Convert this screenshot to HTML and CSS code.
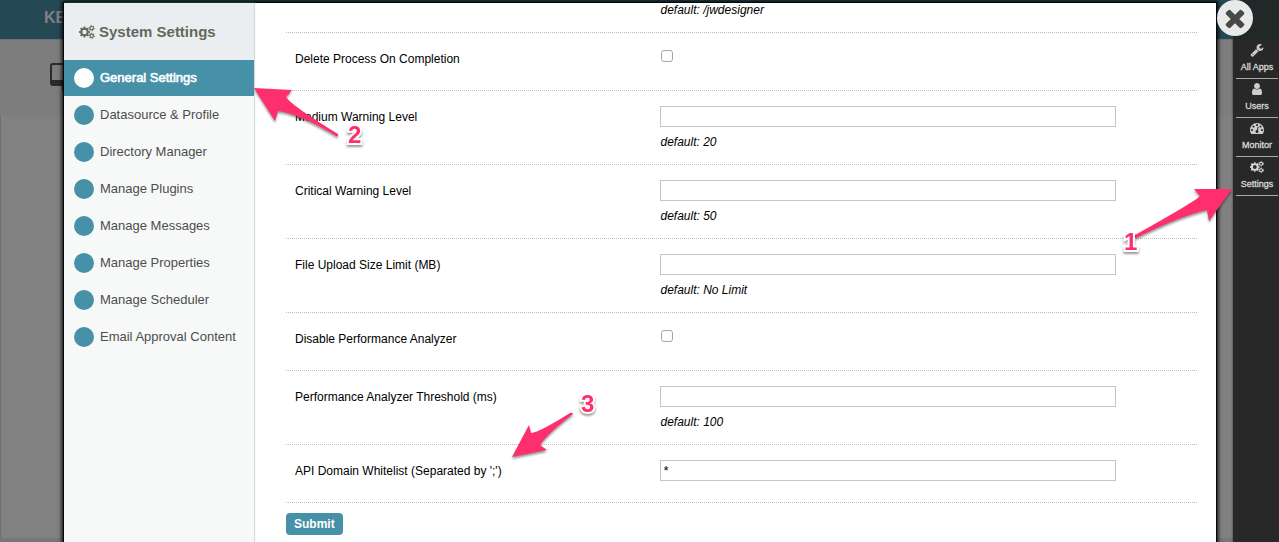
FILE: index.html
```html
<!DOCTYPE html>
<html lang="en">
<head>
<meta charset="utf-8">
<title>System Settings</title>
<link rel="stylesheet" href="styles.css">
</head>
<body>
<svg class="sprite" aria-hidden="true">
  <symbol id="gears" viewBox="0 0 16 14">
    <g fill="none" stroke="currentColor">
      <circle cx="5.5" cy="7" r="3.3" stroke-width="2.2"/>
      <circle cx="5.5" cy="7" r="4.7" stroke-width="1.6" pathLength="16" stroke-dasharray="1 1" stroke-dashoffset=".5"/>
      <circle cx="12.7" cy="3.2" r="1.7" stroke-width="1.2"/>
      <circle cx="12.7" cy="3.2" r="2.6" stroke-width="1" pathLength="12" stroke-dasharray="1 1"/>
      <circle cx="12.7" cy="10.8" r="1.7" stroke-width="1.2"/>
      <circle cx="12.7" cy="10.8" r="2.6" stroke-width="1" pathLength="12" stroke-dasharray="1 1"/>
    </g>
  </symbol>
</svg>

<div class="page">
  <header class="topbar"><span class="brand">KE</span></header>
  <div class="tools">
    <svg class="monitor" viewBox="0 0 34 30" aria-hidden="true">
      <rect x="1" y="1" width="32" height="21" rx="2" fill="none" stroke="#2b2b2b" stroke-width="2"/>
      <path d="M1 17h32v4q0 2-2 2H3q-2 0-2-2zM12 23h10v5H12z" fill="#2b2b2b"/>
    </svg>
  </div>
  <main class="canvas"></main>
  <footer class="foot"></footer>
</div>

<nav class="quick" aria-label="Administration">
  <a href="#apps"><svg viewBox="0 0 1792 1792"><path d="M448 1472q0-26-19-45t-45-19-45 19-19 45 19 45 45 19 45-19 19-45zm644-420l-682 682q-37 37-90 37-52 0-91-37l-106-108q-38-36-38-90 0-53 38-91l681-681q39 98 114.500 173.500t173.500 114.500zm634-435q0 39-23 106-47 134-164.500 217.500t-258.500 83.500q-185 0-316.500-131.500t-131.500-316.500 131.500-316.500 316.500-131.500q58 0 121.500 16.500t107.500 46.500q16 11 16 28t-16 28l-293 169v224l193 107q5-3 79-48.500t135.500-81 70.500-35.500q15 0 23.500 10t8.500 25z"/></svg>All Apps</a>
  <a href="#users"><svg viewBox="0 0 1792 1792"><path d="M1536 1399q0 109-62.500 187t-150.500 78h-854q-88 0-150.500-78t-62.500-187q0-85 8.500-160.500t31.500-152 58.500-131 94-89 134.500-34.500q131 128 313 128t313-128q76 0 134.500 34.500t94 89 58.500 131 31.500 152 8.500 160.500zm-256-887q0 159-112.500 271.500t-271.500 112.500-271.500-112.500-112.500-271.500 112.500-271.500 271.500-112.500 271.500 112.500 112.500 271.500z"/></svg>Users</a>
  <a href="#monitor"><svg viewBox="0 0 1792 1792"><path d="M384 1152q0-53-37.500-90.500t-90.500-37.500-90.500 37.500-37.500 90.500 37.500 90.500 90.500 37.500 90.500-37.500 37.500-90.500zm192-448q0-53-37.500-90.500t-90.500-37.500-90.500 37.500-37.500 90.500 37.500 90.500 90.500 37.500 90.500-37.500 37.500-90.500zm428 481l101-382q6-26-7.500-48.500t-38.500-29.500-48 6.500-30 39.500l-101 382q-60 5-107 43.500t-63 98.500q-20 77 20 146t117 89 146-20 89-117q16-60-6-117t-72-91zm660-33q0-53-37.500-90.500t-90.500-37.500-90.500 37.500-37.500 90.500 37.500 90.500 90.500 37.500 90.500-37.500 37.500-90.500zm-640-640q0-53-37.500-90.500t-90.500-37.500-90.500 37.500-37.500 90.500 37.500 90.500 90.500 37.500 90.500-37.500 37.500-90.500zm448 192q0-53-37.500-90.500t-90.500-37.500-90.500 37.500-37.500 90.500 37.500 90.500 90.500 37.500 90.500-37.500 37.500-90.500zm320 448q0 261-141 483-19 29-54 29h-1402q-35 0-54-29-141-221-141-483 0-182 71-348t191-286 286-191 348-71 348 71 286 191 191 286 71 348z"/></svg>Monitor</a>
  <a href="#settings"><svg><use href="#gears"/></svg>Settings</a>
</nav>

<div class="dialog" role="dialog" aria-labelledby="dialog-title">
  <aside class="side">
    <h1 class="side-title" id="dialog-title"><svg><use href="#gears"/></svg>System Settings</h1>
    <nav class="menu">
      <a class="active" href="#general">General Settings</a>
      <a href="#datasource">Datasource &amp; Profile</a>
      <a href="#directory">Directory Manager</a>
      <a href="#plugins">Manage Plugins</a>
      <a href="#messages">Manage Messages</a>
      <a href="#properties">Manage Properties</a>
      <a href="#scheduler">Manage Scheduler</a>
      <a href="#email">Email Approval Content</a>
    </nav>
  </aside>
  <form class="form">
    <div class="row row-first"><div class="field"><span class="hint">default: /jwdesigner</span></div></div>
    <div class="row"><label for="delete">Delete Process On Completion</label><div class="field"><input class="check" type="checkbox" id="delete"></div></div>
    <div class="row"><label for="medium">Medium Warning Level</label><div class="field"><input class="text" type="text" id="medium"><span class="hint">default: 20</span></div></div>
    <div class="row"><label for="critical">Critical Warning Level</label><div class="field"><input class="text" type="text" id="critical"><span class="hint">default: 50</span></div></div>
    <div class="row"><label for="upload">File Upload Size Limit (MB)</label><div class="field"><input class="text" type="text" id="upload"><span class="hint">default: No Limit</span></div></div>
    <div class="row"><label for="analyzer">Disable Performance Analyzer</label><div class="field"><input class="check" type="checkbox" id="analyzer"></div></div>
    <div class="row"><label for="threshold">Performance Analyzer Threshold (ms)</label><div class="field"><input class="text" type="text" id="threshold"><span class="hint">default: 100</span></div></div>
    <div class="row"><label for="whitelist">API Domain Whitelist (Separated by ';')</label><div class="field"><input class="text" type="text" id="whitelist" value="*"></div></div>
    <button class="submit" type="submit">Submit</button>
  </form>
</div>

<button class="close" type="button" aria-label="Close"><svg viewBox="0 0 1792 1792"><path d="M1490 1322q0 40-28 68l-136 136q-28 28-68 28t-68-28l-294-294-294 294q-28 28-68 28t-68-28l-136-136q-28-28-28-68t28-68l294-294-294-294q-28-28-28-68t28-68l136-136q28-28 68-28t68 28l294 294 294-294q28-28 68-28t68 28l136 136q28 28 28 68t-28 68l-294 294 294 294q28 28 28 68z"/></svg></button>

<div class="note note-1">
  <svg viewBox="0 0 120 70"><path d="M112 9H74L80 16Q76 21 15 55Q14 58 16 58Q60 36 87 30L89 41Z"/></svg>
  <span>1</span>
</div>
<div class="note note-2">
  <svg viewBox="0 0 120 70"><path d="M4 8L42 10L36 17Q42 26 88 54Q89 57 86 56Q50 34 28 31L25 41Z"/></svg>
  <span>2</span>
</div>
<div class="note note-3">
  <svg viewBox="0 0 120 70"><path d="M12 57L29 25L31 33Q40 32 70 13Q73 12 73 14Q48 33 40 45L47 50Z"/></svg>
  <span>3</span>
</div>
</body>
</html>
```
FILE: styles.css
```css
* { box-sizing: border-box; }

body {
  margin: 0;
  height: 100vh;
  position: relative;
  overflow: hidden;
  font-family: "Liberation Sans", Arial, sans-serif;
  font-size: 12px;
  line-height: 14px;
  color: #000;
}

a { color: inherit; text-decoration: none; }

.sprite { position: absolute; width: 0; height: 0; }

/* Dimmed page behind the dialog */
.page {
  height: 100%;
  display: flex;
  flex-direction: column;
  background: #7d7d7d;
}
.topbar {
  height: 39px;
  padding: 9px 44px;
  background: #244955;
  color: #808080;
}
.brand { font-size: 16px; line-height: 18px; font-weight: bold; }
.tools { height: 77px; padding: 23px 50px; border-top: 1px solid #6c7274; }
.monitor { display: block; width: 34px; height: 30px; }
.canvas { flex: 1; border-left: 1px solid #6e6e6e; background: #818181; }
.foot { height: 4px; background: #75777a; }

/* Right-hand admin bar */
.quick {
  position: absolute;
  top: 0;
  right: 0;
  bottom: 0;
  width: 46px;
  padding: 40px 1px 0 3px;
  background: linear-gradient(#222727 39px, #282828 39px);
  color: #d8d8d8;
  box-shadow: 0 0 2px #333;
}
.quick a {
  display: flex;
  flex-direction: column;
  align-items: center;
  gap: 3px;
  height: 39px;
  padding-top: 3px;
  border-bottom: 1px solid #aaa;
  font-size: 9px;
  line-height: 14px;
  white-space: nowrap;
  -webkit-text-stroke: 0.3px #d8d8d8;
}
.quick svg { width: 14px; height: 14px; fill: #ccc; flex: none; }

/* Settings dialog */
.dialog {
  position: absolute;
  top: 3px;
  right: 63px;
  bottom: 0;
  left: 64px;
  display: flex;
  background: #fff;
  box-shadow: 0 0 0 1px #080808, 0 0 4px 2px #000;
}
.side {
  width: 190px;
  flex: none;
  background: #f7f9f8;
  box-shadow: 1px 0 1px #d8dada;
}
.side-title {
  display: flex;
  align-items: center;
  gap: 4px;
  height: 57px;
  margin: 0;
  padding: 0 15px;
  background: #ebeef0;
  color: #62695a;
  font-size: 15px;
  line-height: 18px;
}
.side-title svg { width: 16px; height: 14px; }
.menu { display: flex; flex-direction: column; gap: 1px; }
.menu a {
  display: flex;
  align-items: center;
  gap: 6px;
  height: 36px;
  padding-left: 10px;
  color: #4d4d4d;
  font-size: 13px;
  white-space: nowrap;
}
.menu a::before {
  content: "";
  width: 20px;
  height: 20px;
  border-radius: 50%;
  background: #4690a8;
}
.menu .active {
  background: #4690a8;
  color: #fff;
  -webkit-text-stroke: 0.6px #fff;
}
.menu .active::before { background: #fff; }

.form { flex: 1; padding: 0 19px 0 32px; overflow: hidden; }
.row {
  display: grid;
  grid-template-columns: 41% 1fr;
  min-height: 58px;
  border-bottom: 1px dotted #bbb;
}
.row label { padding: 19px 9px 0; }
.field {
  grid-column: 2;
  display: flex;
  flex-direction: column;
  align-items: flex-start;
  gap: 8px;
  padding: 15px 0;
}
.row-first { min-height: 0; }
.row-first .field { padding-top: 0; }
.text {
  width: 85%;
  height: 21px;
  padding: 0 3px;
  border: 1px solid #c4c4c4;
  background: #fff;
  font: 13px "Liberation Sans", Arial, sans-serif;
}
.check {
  appearance: none;
  width: 12px;
  height: 12px;
  margin: 2px 1px;
  border: 1px solid #a6a6a6;
  border-radius: 3px;
  background: #fff;
}
.check:checked { background: #4690a8; }
.hint { padding-left: 1px; font-style: italic; }
.submit {
  display: block;
  height: 22px;
  margin-top: 10px;
  padding: 0 8px;
  border: 0;
  border-radius: 4px;
  background: #4690a8;
  color: #fff;
  font: bold 12px "Liberation Sans", Arial, sans-serif;
}

.close {
  position: absolute;
  top: 0;
  right: 26px;
  display: flex;
  align-items: center;
  justify-content: center;
  width: 36px;
  height: 36px;
  padding: 0;
  border: 0;
  border-radius: 50%;
  background: #e8eaea;
}
.close svg { width: 28px; height: 28px; flex: none; fill: #484848; }

/* Callout arrows and their numbers */
.note {
  position: absolute;
  width: 120px;
  height: 70px;
  pointer-events: none;
  color: #ff2e6d;
  font-size: 24px;
  line-height: 20px;
  font-weight: bold;
}
.note svg {
  display: block;
  width: 120px;
  height: 70px;
  fill: #ff2e6d;
  filter: drop-shadow(0 2px 1px rgb(0 0 0 / 40%));
}
.note span {
  position: absolute;
  -webkit-text-stroke: 4px #fff;
  paint-order: stroke fill;
  filter: drop-shadow(0 2px 1px rgb(0 0 0 / 40%));
}
.note-1 { top: 180px; right: 39px; }
.note-1 span { left: 4px; top: 52px; }
.note-2 { top: 80px; left: 250px; }
.note-2 span { left: 98px; top: 45px; }
.note-3 { top: 400px; left: 500px; }
.note-3 span { left: 81px; top: -6px; }
```
